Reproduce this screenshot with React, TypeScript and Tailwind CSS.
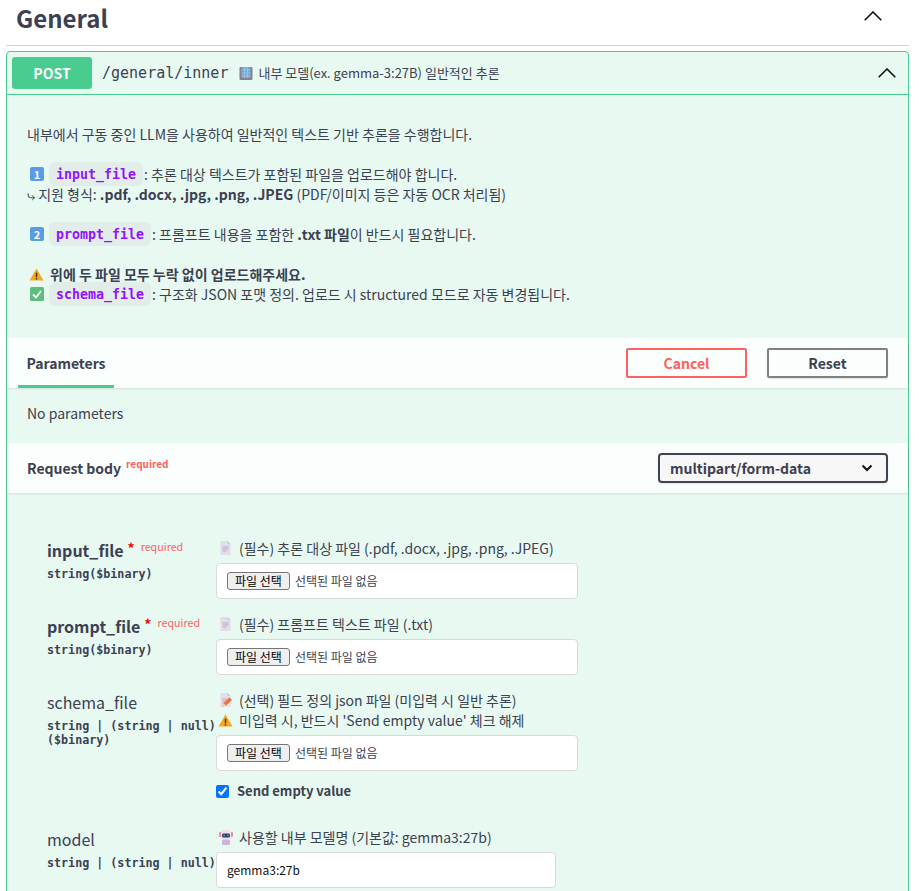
const sans = '[font-family:"Noto_Sans_CJK_KR","Noto_Sans",sans-serif]'

function Num({ n }: { n: string }) {
  return (
    <span className="ml-[3px] inline-flex size-[14px] shrink-0 items-center justify-center rounded-[2px] bg-[#5a9be8] text-[11px] font-bold leading-none text-white">
      {n}
    </span>
  )
}

function Warn({ className = '' }: { className?: string }) {
  return (
    <svg viewBox="0 0 16 16" className={`inline-block size-[15px] shrink-0 ${className}`}>
      <path d="M8 1.5 15.5 14.5H.5Z" fill="#f5a623" />
      <rect x="7.2" y="6" width="1.6" height="5" fill="#4a3a20" />
      <rect x="7.2" y="11.8" width="1.6" height="1.6" fill="#4a3a20" />
    </svg>
  )
}

function Chip({ children }: { children: string }) {
  return (
    <code className="inline-block h-6 rounded-[6px] bg-[#e2ece8] px-[7px] align-middle font-['DejaVu_Sans_Mono',monospace] text-[13.3px] font-bold leading-[26px] text-[#9012fe]">
      {children}
    </code>
  )
}

function DocIcon({ pencil = false }: { pencil?: boolean }) {
  return (
    <svg viewBox="0 0 14 14" className="size-[14px] shrink-0">
      <path d="M1.5 0h7l3 3v11h-10Z" fill="#e3dcea" />
      <path d="M8.5 0l3 3h-3Z" fill="#cfc5da" />
      <path d="M3.5 6h6M3.5 8h6M3.5 10h4" stroke="#b9aecb" strokeWidth="1" />
      {pencil && (
        <>
          <path d="M3.5 13.5l1-3.5 6-5.5 2.5 2.5-6 5.5Z" fill="#f0703c" />
          <path d="M3.5 13.5l1-3.5 2.5 2.5Z" fill="#f7d3a8" />
        </>
      )}
    </svg>
  )
}

function Caret({ className = '' }: { className?: string }) {
  return (
    <svg viewBox="0 0 18 10" className={`h-[10px] w-[18px] ${className}`}>
      <path d="M.7 9.3 9 1l8.3 8.3" fill="none" stroke="#111" strokeWidth="1.6" />
    </svg>
  )
}

function FileInput() {
  return (
    <div className="flex h-9 w-[362px] items-center rounded-[4px] border border-[#d9d9d9] bg-white pl-[10px]">
      <span className="flex h-[18px] w-[63px] items-center justify-center rounded-[3px] border border-[#767676] bg-[#efefef] text-[12px] leading-none text-black">
        파일 선택
      </span>
      <span className="ml-[5px] text-[12px] text-[#3b4151]">선택된 파일 없음</span>
    </div>
  )
}

function ParamLabel({ name, required, types }: { name: string; required?: boolean; types: string[] }) {
  return (
    <div className="w-[169px] shrink-0">
      <div className="flex items-start">
        <span className={`text-[16px] leading-6 text-[#3b4151] ${required ? 'font-semibold' : ''}`}>{name}</span>
        {required && (
          <>
            <span className="ml-1 text-[14px] font-bold leading-5 text-[#f00]">*</span>
            <span className="ml-[6px] mt-[1px] text-[10.7px] leading-4 text-[#ff6060]">required</span>
          </>
        )}
      </div>
      <div className="mt-[5px] font-['DejaVu_Sans_Mono',monospace] text-[11.7px] font-semibold leading-[14px] text-[#3b4151]">
        {types.map((t) => (
          <div key={t} className="whitespace-nowrap">{t}</div>
        ))}
      </div>
    </div>
  )
}

export default function App() {
  return (
    <div className={`h-[891px] w-[919px] overflow-hidden bg-white text-[#3b4151] ${sans}`}>
      <div className="ml-[6px] mr-[10px]">
        <div className="flex h-[46px] items-center justify-between border-b border-[#d0d0d0] pb-[10px] pl-[10px] pr-[27px]">
          <h3 className="text-[24px] font-bold leading-[36px]">General</h3>
          <Caret className="-mt-[3px]" />
        </div>

        <div className="mt-[5px] rounded-[4px] border border-[#49cc90] bg-[#e8f9f1]">
          <div className="flex h-[43px] items-center border-b border-[#49cc90] pl-[5px] pr-[12px]">
            <span className="flex h-8 w-[80px] items-center justify-center rounded-[3px] bg-[#49cc90] text-[14px] font-bold text-white">
              POST
            </span>
            <span className="ml-[10px] font-['DejaVu_Sans_Mono',monospace] text-[15px] text-[#3b4151]">/general/inner</span>
            <svg viewBox="0 0 14 14" className="ml-[11px] size-[14px]">
              <rect x="0.5" y="1" width="13" height="13" rx="1" fill="#8b7f8f" />
              <rect x="2.5" y="1" width="9" height="11" fill="#6fa8d8" />
              <path d="M2.5 4h9M2.5 7h9M2.5 10h9M5.5 1v11M8.5 1v11" stroke="#a9cbe6" strokeWidth="0.7" />
            </svg>
            <span className="ml-[5px] text-[13px] text-[#3b4151]">내부 모델(ex. gemma-3:27B) 일반적인 추론</span>
            <Caret className="ml-auto" />
          </div>

          <div className="px-5 pb-[34px] pt-[29px] text-[14px] leading-5">
            <p>내부에서 구동 중인 LLM을 사용하여 일반적인 텍스트 기반 추론을 수행합니다.</p>
            <p className="mt-5 flex h-5 items-center">
              <Num n="1" />
              <span className="ml-[5px]"><Chip>input_file</Chip></span>
              <span className="ml-[1px]">: 추론 대상 텍스트가 포함된 파일을 업로드해야 합니다.</span>
            </p>
            <p>⤷ 지원 형식: <strong>.pdf, .docx, .jpg, .png, .JPEG</strong> (PDF/이미지 등은 자동 OCR 처리됨)</p>
            <p className="mt-5 flex h-5 items-center">
              <Num n="2" />
              <span className="ml-[5px]"><Chip>prompt_file</Chip></span>
              <span className="ml-[1px]">: 프롬프트 내용을 포함한&nbsp;<strong>.txt 파일</strong>이 반드시 필요합니다.</span>
            </p>
            <p className="mt-5 flex h-5 items-center font-bold">
              <Warn className="ml-[2px] mr-[6px]" />
              위에 두 파일 모두 누락 없이 업로드해주세요.
            </p>
            <p className="flex h-5 items-center">
              <svg viewBox="0 0 14 14" className="ml-[3px] size-[14px] shrink-0">
                <rect width="14" height="14" rx="1.5" fill="#5cbf7f" />
                <path d="M3 7.5 6 10.5 11 4" fill="none" stroke="#fff" strokeWidth="1.8" />
              </svg>
              <span className="ml-[5px]"><Chip>schema_file</Chip></span>
              <span className="ml-[1px]">: 구조화 JSON 포맷 정의. 업로드 시 structured 모드로 자동 변경됩니다.</span>
            </p>
          </div>

          <div className="flex h-[50px] items-stretch justify-between bg-white/80 pl-[11px] pr-[20px] shadow-[0_1px_2px_rgba(0,0,0,0.1)]">
            <div className="flex w-[96px] items-center justify-center border-b-[3px] border-[#49cc90] pt-[3px] text-[14px] font-bold">
              Parameters
            </div>
            <div className="flex items-center gap-[20px]">
              <button className="h-[30px] w-[121px] rounded-[2px] border-2 border-[#ff6060] text-[14px] font-bold text-[#ff6060]">Cancel</button>
              <button className="h-[30px] w-[121px] rounded-[2px] border-2 border-[#808080] text-[14px] font-bold text-[#3b4151] shadow-[0_1px_2px_rgba(0,0,0,0.1)]">Reset</button>
            </div>
          </div>

          <div className="flex h-[55px] items-center px-5 pb-[4px] text-[14px]">No parameters</div>

          <div className="flex h-[50px] items-center justify-between bg-white/80 pl-5 pr-[20px] shadow-[0_1px_2px_rgba(0,0,0,0.1)]">
            <div className="flex items-start text-[14px] font-bold">
              Request body
              <span className="ml-[5px] -mt-[2px] text-[10px] font-bold leading-4 text-[#ff6060]">required</span>
            </div>
            <div className="flex h-[30px] w-[230px] items-center justify-between rounded-[4px] border-2 border-[#41444e] bg-[#f7f7f7] pl-[10px] pr-[13px] text-[14px] font-bold shadow-[0_1px_2px_rgba(0,0,0,0.1)]">
              multipart/form-data
              <svg viewBox="0 0 12 8" className="h-2 w-3">
                <path d="M1.5 1.5 6 6l4.5-4.5" fill="none" stroke="#111" strokeWidth="2" />
              </svg>
            </div>
          </div>

          <div className="px-10 pb-10 pt-[45px]">
            <div className="flex">
              <ParamLabel name="input_file" required types={['string($binary)']} />
              <div>
                <div className="flex h-5 items-center gap-[6px] pl-[3px] text-[14px]"><DocIcon />(필수) 추론 대상 파일 (.pdf, .docx, .jpg, .png, .JPEG)</div>
                <div className="mt-[5px]"><FileInput /></div>
              </div>
            </div>

            <div className="mt-[15px] flex">
              <ParamLabel name="prompt_file" required types={['string($binary)']} />
              <div>
                <div className="flex h-5 items-center gap-[6px] pl-[3px] text-[14px]"><DocIcon />(필수) 프롬프트 텍스트 파일 (.txt)</div>
                <div className="mt-[5px]"><FileInput /></div>
              </div>
            </div>

            <div className="mt-[15px] flex">
              <ParamLabel name="schema_file" types={['string | (string | null)', '($binary)']} />
              <div>
                <div className="flex h-5 items-center gap-[6px] pl-[3px] text-[14px]"><DocIcon pencil />(선택) 필드 정의 json 파일 (미입력 시 일반 추론)</div>
                <div className="flex h-[21px] items-center gap-[6px] pl-[2px] text-[14px]"><Warn />미입력 시, 반드시 'Send empty value' 체크 해제</div>
                <div className="mt-[4px]"><FileInput /></div>
                <label className="mt-[10px] flex h-5 items-center text-[13px] font-bold">
                  <input type="checkbox" defaultChecked readOnly className="m-0 size-[13px] accent-[#0075ff]" />
                  <span className="ml-2">Send empty value</span>
                </label>
              </div>
            </div>

            <div className="mt-[26px] flex">
              <ParamLabel name="model" types={['string | (string | null)']} />
              <div>
                <div className="flex h-5 items-center gap-[6px] pl-[3px] text-[14px]">
                  <svg viewBox="0 0 14 15" className="h-[15px] w-[14px] shrink-0">
                    <rect x="0" y="2" width="2.5" height="5" rx="1" fill="#f08ab0" />
                    <rect x="11.5" y="2" width="2.5" height="5" rx="1" fill="#f08ab0" />
                    <rect x="2" y="0" width="10" height="9.5" rx="2.5" fill="#f3dfe6" />
                    <rect x="3" y="3.5" width="8" height="4" rx="1.5" fill="#24406b" />
                    <rect x="4.5" y="4.8" width="1.3" height="1.3" fill="#57d0e8" />
                    <rect x="8.2" y="4.8" width="1.3" height="1.3" fill="#57d0e8" />
                    <rect x="3" y="9.5" width="8" height="5.5" rx="1.5" fill="#c9b4dc" />
                  </svg>
                  사용할 내부 모델명 (기본값: gemma3:27b)
                </div>
                <div className="mt-[5px] flex h-9 w-[340px] items-center rounded-[4px] border border-[#d9d9d9] bg-white pl-[10px] text-[12px] text-[#111]">
                  gemma3:27b
                </div>
              </div>
            </div>
          </div>
        </div>
      </div>
    </div>
  )
}
